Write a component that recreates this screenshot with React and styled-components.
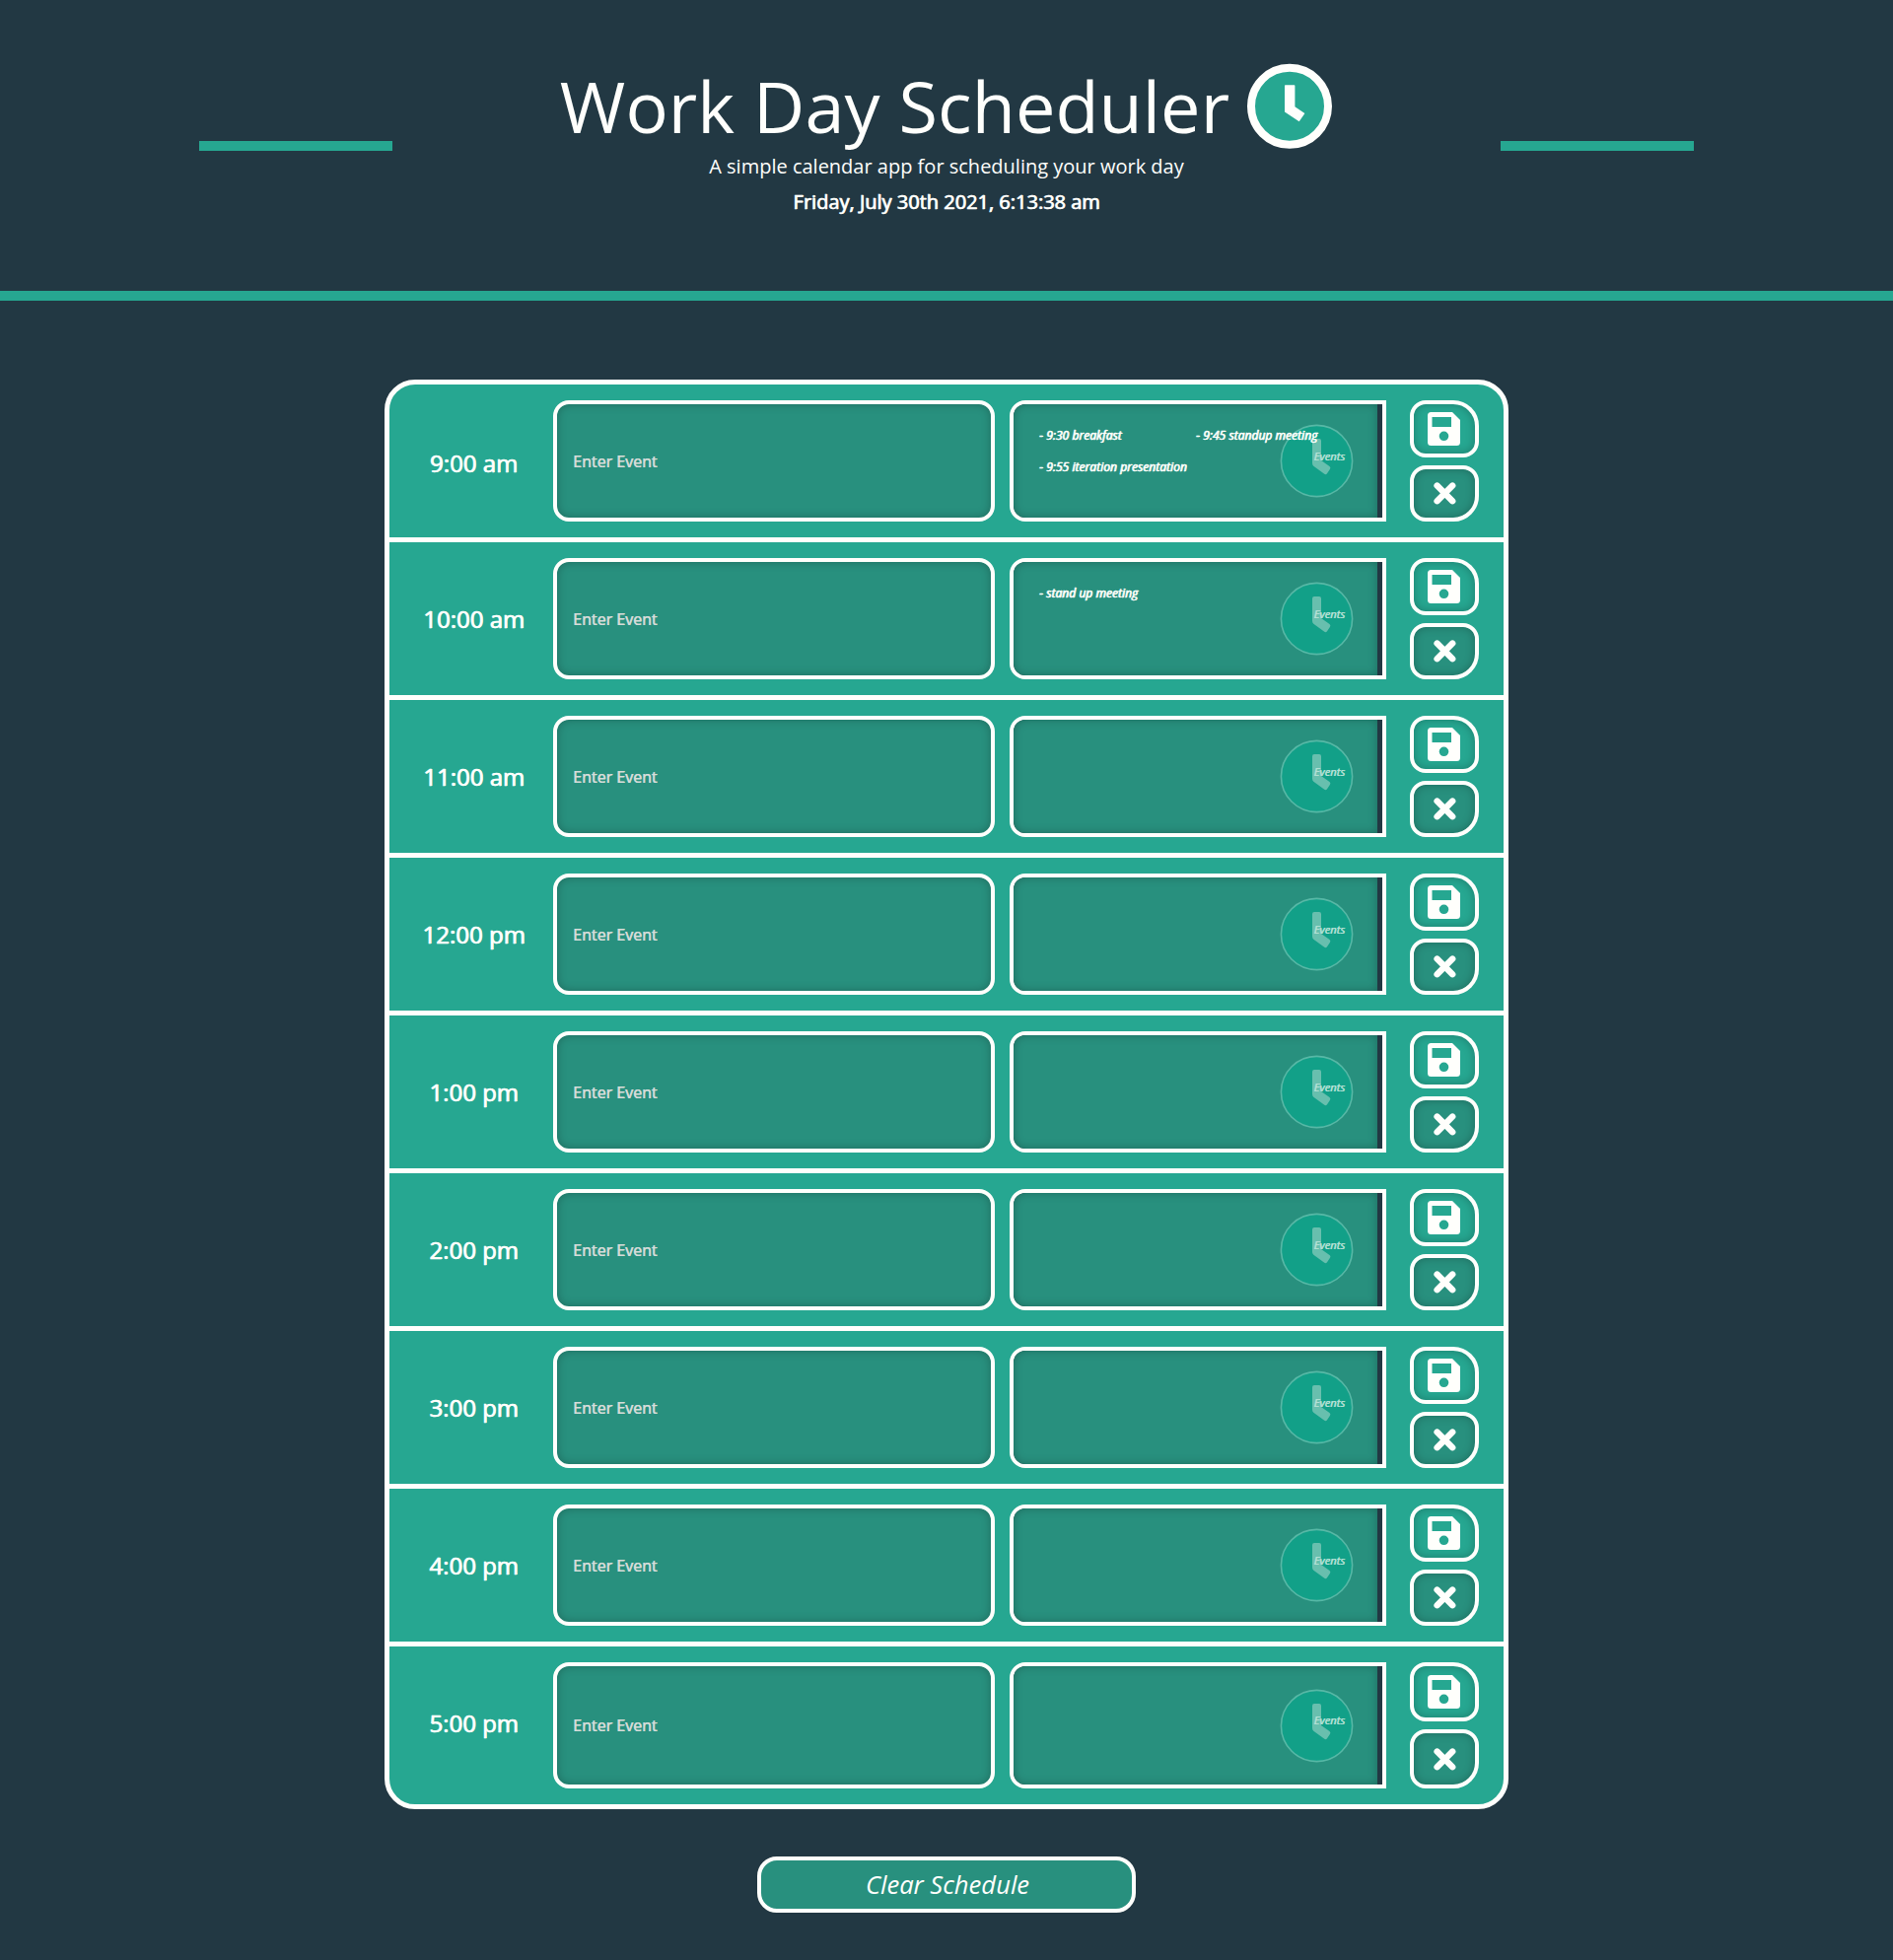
import React from "react";
import styled, { createGlobalStyle, css } from "styled-components";

const C = { bg: "#223843", teal: "#26a791", deep: "#28907e", white: "#fffffc", clock: "#12a088" };

const Global = createGlobalStyle`
  *, *::before, *::after { box-sizing: border-box; }
  body { margin: 0; background: ${C.bg}; color: ${C.white}; font-family: "Open Sans", "Noto Sans", sans-serif; font-size: 16px; line-height: 1.5; }
  button, input { font-family: inherit; color: inherit; }
`;

const Page = styled.div`
  min-height: 1988px;
`;

const Header = styled.header`
  height: 305px;
  border-bottom: 10px solid ${C.teal};
  display: grid;
  grid-template-columns: 196px 1fr 196px;
  padding: 64px 202px 0;
`;

const Accent = styled.div`
  height: 10px;
  margin-top: 79px;
  background: ${C.teal};
`;

const Heading = styled.div`
  display: flex;
  flex-direction: column;
  align-items: center;
`;

const TitleRow = styled.div`
  display: flex;
  align-items: flex-start;
  gap: 17px;
  height: 88px;
`;

const Title = styled.h1`
  margin: 0;
  font-size: 72px;
  font-weight: 400;
  line-height: 86px;
  letter-spacing: 0.1px;
  white-space: nowrap;
`;

const TitleClock = styled.svg`
  width: 88px;
  height: 88px;
`;

const heavy = css`
  -webkit-text-stroke: 0.3px currentColor;
  text-shadow: 0.7px 0 0 currentColor;
`;

const Lead = styled.p`
  margin: 0;
  padding-top: 2px;
  font-size: 20px;
  line-height: 30px;
`;

const Today = styled.p`
  ${heavy}
  margin: 6px 0 0;
  font-size: 20px;
  line-height: 30px;
`;

const Main = styled.main`
  display: flex;
  flex-direction: column;
  align-items: center;
  padding-top: 80px;
`;

const Board = styled.section`
  width: 1140px;
  height: 1450px;
  border: 5px solid ${C.white};
  border-radius: 31px;
  background: ${C.teal};
  display: flex;
  flex-direction: column;
`;

const Hour = styled.div`
  ${heavy}
  display: flex;
  justify-content: center;
  padding: 44px 0 0 5px;
  font-size: 24px;
  line-height: 36px;
`;

const Row = styled.div`
  height: 160px;
  display: grid;
  grid-template-columns: 166px 448px 397px 70px;
  padding: 16px 0;
  &:not(:last-child) { border-bottom: 5px solid ${C.white}; }
  &:first-child ${Hour} { padding-top: 46px; }
`;

const panel = css`
  border: 4px solid ${C.white};
  background: ${C.deep};
  box-shadow: inset 0 0 10px rgba(0, 0, 0, 0.25);
`;

const EventInput = styled.input`
  ${panel}
  width: 448px;
  height: 100%;
  border-radius: 16px;
  padding: 0 16px;
  outline: none;
  font-size: 16px;
  &::placeholder { color: #d6dcd9; opacity: 1; -webkit-text-stroke: 0.2px #d6dcd9; text-shadow: 0.6px 0 0 #d6dcd9; }
`;

const Events = styled.div`
  border: 4px solid ${C.white};
  border-radius: 16px 0 0 16px;
  background: ${C.bg};
  margin-left: 15px;
  width: 382px;
  display: flex;
`;

const EventsInner = styled.div`
  position: relative;
  flex: 1;
  margin-right: 5px;
  border-radius: 12px 0 0 12px;
  background: ${C.deep};
  box-shadow: inset 0 0 10px rgba(0, 0, 0, 0.25);
  display: flex;
  align-items: center;
  justify-content: flex-end;
  padding-right: 24px;
`;

const EventList = styled.ul`
  ${heavy}
  position: absolute;
  z-index: 1;
  inset: 16px auto auto 26px;
  margin: 0;
  padding: 0;
  list-style: none;
  display: grid;
  grid-template-columns: 159px 159px;
  font-size: 12px;
  font-style: italic;
  line-height: 32px;
  letter-spacing: 0.05px;
  white-space: nowrap;
`;

const EventClock = styled.svg`
  width: 75px;
  height: 75px;
`;

const EventsLabel = styled.span`
  position: absolute;
  right: 33px;
  top: calc(50% - 14px);
  font-size: 11.2px;
  line-height: 18px;
  font-style: italic;
  color: #b5e0d6;
  -webkit-text-stroke: 0.2px #b5e0d6;
  text-shadow: 0.5px 0 0 #b5e0d6;
`;

const Actions = styled.div`
  margin-left: 24px;
  width: 70px;
  display: grid;
  grid-template-rows: 1fr 1fr;
  gap: 8px;
`;

const ActionButton = styled.button`
  ${panel}
  background: ${(p) => (p.$save ? C.teal : C.deep)};
  border-radius: ${(p) => (p.$save ? "16px 26px 16px 16px" : "16px 16px 26px 16px")};
  padding: ${(p) => (p.$save ? "0 1px 0 0" : "0")};
  display: flex;
  align-items: center;
  justify-content: center;
`;

const ClearButton = styled.button`
  margin-top: 48px;
  width: 384px;
  height: 57px;
  border: 4px solid ${C.white};
  border-radius: 20px;
  background: ${C.deep};
  font-size: 25.6px;
  font-style: italic;
  padding: 0 0 0 2px;
`;

const SaveIcon = () => (
  <svg width="33" height="34" viewBox="0 0 33 34">
    <path fill={C.white} fillRule="evenodd" d="M3.5 0H25L33 8V30.5Q33 34 29.5 34H3.5Q0 34 0 30.5V3.5Q0 0 3.5 0ZM4.5 5V15H24V5ZM16.5 19.5a4.8 4.8 0 1 0 0 9.6a4.8 4.8 0 1 0 0-9.6Z" />
  </svg>
);

const CloseIcon = () => (
  <svg width="23" height="23" viewBox="0 0 23 23">
    <path stroke={C.white} strokeWidth="6.4" strokeLinecap="round" d="M3.6 3.6L19.2 19.2M19.2 3.6L3.6 19.2" />
  </svg>
);

const rows = [
  ["9:00 am", ["- 9:30 breakfast", "- 9:45 standup meeting", "- 9:55 iteration presentation"]],
  ["10:00 am", ["- stand up meeting"]],
  ["11:00 am", []],
  ["12:00 pm", []],
  ["1:00 pm", []],
  ["2:00 pm", []],
  ["3:00 pm", []],
  ["4:00 pm", []],
  ["5:00 pm", []],
];

export default function App() {
  return (
    <Page>
      <Global />
      <Header>
        <Accent />
        <Heading>
          <TitleRow>
            <Title>Work Day Scheduler</Title>
            <TitleClock viewBox="0 0 88 88">
              <circle cx="44" cy="43.8" r="39" fill={C.teal} stroke={C.white} strokeWidth="8" />
              <path fill={C.white} d="M39 23q0-.7.7-.7h9q.7 0 .7.7v21.300l10 6.700-5.700 8.200-14.700-9.600z" />
            </TitleClock>
          </TitleRow>
          <Lead>A simple calendar app for scheduling your work day</Lead>
          <Today>Friday, July 30th 2021, 6:13:38 am</Today>
        </Heading>
        <Accent />
      </Header>
      <Main>
        <Board>
          {rows.map(([hour, events]) => (
            <Row key={hour}>
              <Hour>{hour}</Hour>
              <EventInput placeholder="Enter Event" />
              <Events>
                <EventsInner>
                  <EventList>{events.map((e) => <li key={e}>{e}</li>)}</EventList>
                  <EventClock viewBox="0 0 75 75">
                    <circle cx="37.5" cy="37.500" r="36.1" fill={C.clock} stroke="#57b8a6" strokeWidth="1.6" />
                    <path fill="#68bfae" d="M35 15h5q2 0 2 2v20l8.500 6q1.500 1.200 .5 2.700l-3 4.600q-1.200 1.500-2.700 .4l-11-8q-1.300-1.200-1.300-3V17q0-2 2-2z" />
                  </EventClock>
                  <EventsLabel>Events</EventsLabel>
                </EventsInner>
              </Events>
              <Actions>
                <ActionButton $save aria-label="Save"><SaveIcon /></ActionButton>
                <ActionButton aria-label="Delete"><CloseIcon /></ActionButton>
              </Actions>
            </Row>
          ))}
        </Board>
        <ClearButton>Clear Schedule</ClearButton>
      </Main>
    </Page>
  );
}
